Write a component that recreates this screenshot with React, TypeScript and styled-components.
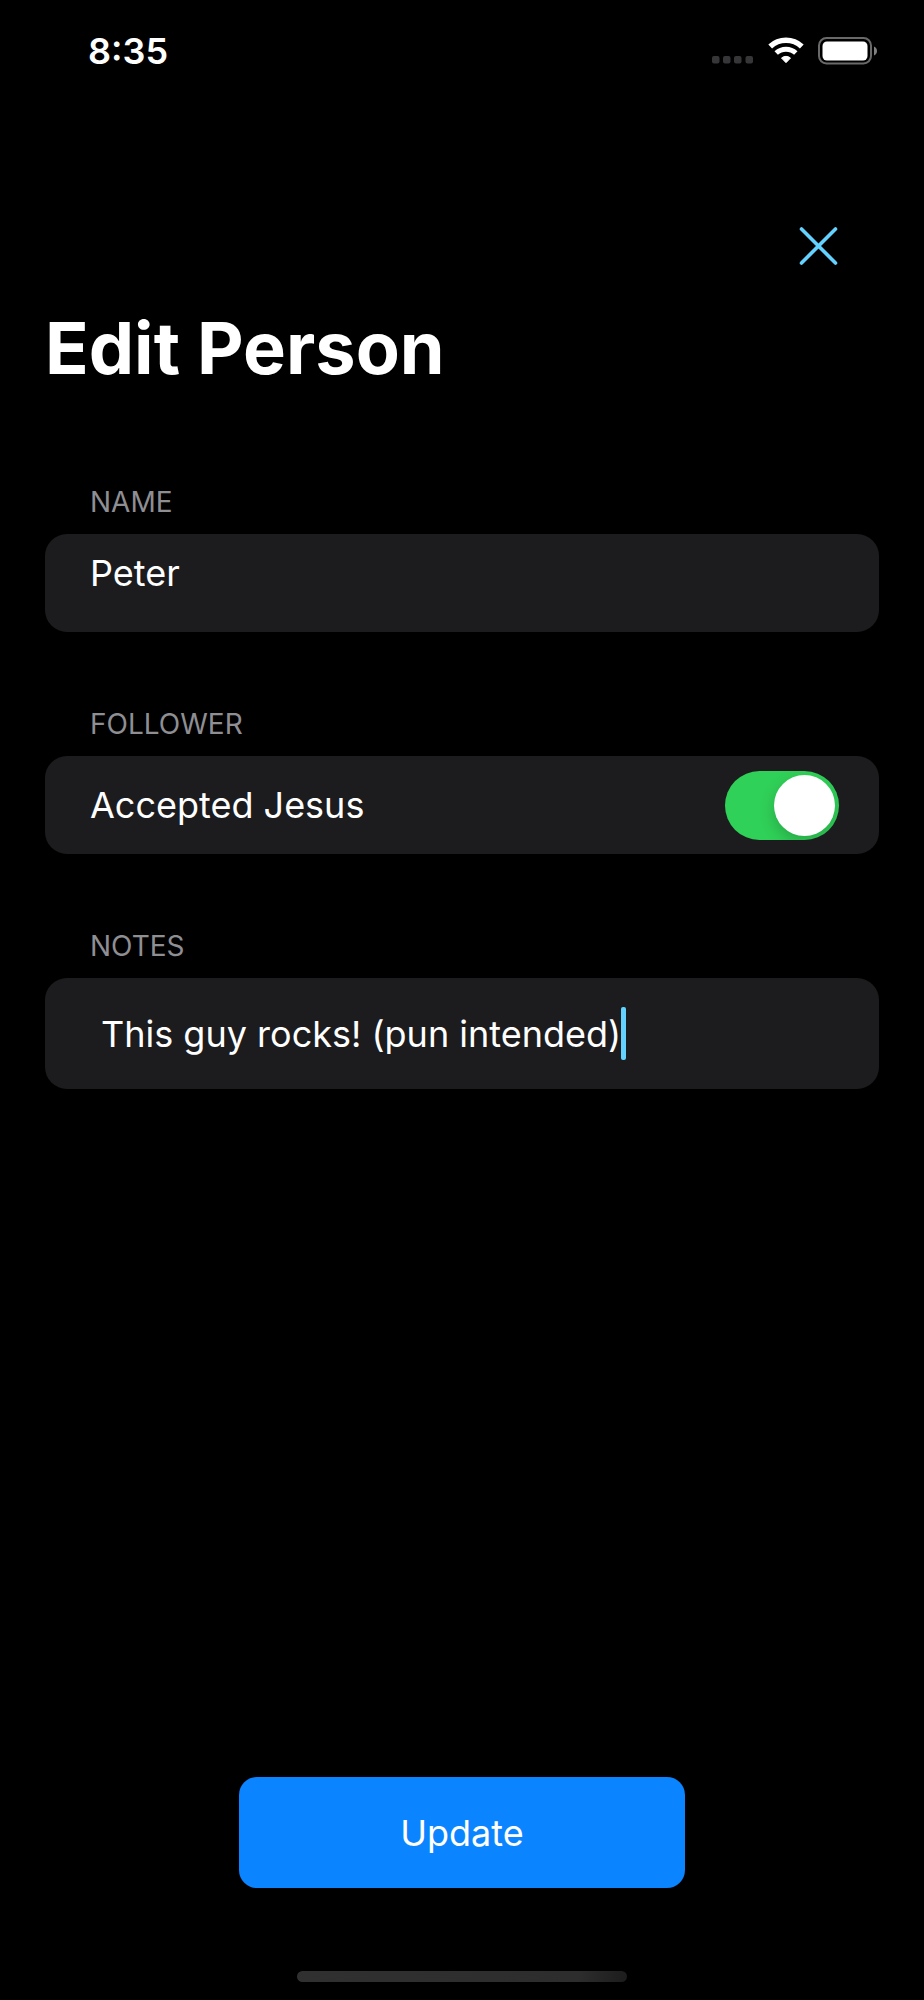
import React, { useState } from "react";
import styled, { createGlobalStyle } from "styled-components";

const GlobalStyle = createGlobalStyle`
  * { box-sizing: border-box; }
  body {
    margin: 0;
    background: #000;
    color: #fff;
    font-family: Inter, "Liberation Sans", sans-serif;
    -webkit-font-smoothing: antialiased;
  }
  button, input { font-family: inherit; color: inherit; }
`;

const Screen = styled.div`
  min-height: 100vh;
  display: flex;
  flex-direction: column;
`;

const StatusBar = styled.header`
  display: flex;
  align-items: center;
  justify-content: space-between;
  height: 102px;
  padding: 0 46px 0 88px;
`;

const Clock = styled.time`
  font-size: 36px;
  line-height: 44px;
  font-weight: 600;
`;

const StatusIcons = styled.div`
  display: flex;
  align-items: center;
  gap: 14px;

  svg { display: block; }
`;

const Form = styled.form`
  flex: 1;
  display: flex;
  flex-direction: column;
  padding: 108px 45px 83px;
`;

const CloseButton = styled.button`
  align-self: flex-end;
  display: flex;
  margin-right: 24px;
  padding: 0;
  border: 0;
  background: none;
  cursor: pointer;
`;

const Title = styled.h1`
  margin: 22px 0 0;
  font-size: 72px;
  line-height: 88px;
  font-weight: 700;
`;

const Sections = styled.div`
  display: flex;
  flex-direction: column;
  gap: 74px;
  margin-top: 92px;
`;

const Section = styled.section`
  display: flex;
  flex-direction: column;
  gap: 14px;
`;

const SectionLabel = styled.label`
  padding: 0 45px;
  color: #8e8e93;
  font-size: 28px;
  line-height: 36px;
  text-transform: uppercase;
`;

const Card = styled.div<{ $align?: string; $tall?: boolean }>`
  display: flex;
  align-items: ${(p) => p.$align ?? "center"};
  justify-content: ${(p) => (p.$tall ? "flex-start" : "space-between")};
  min-height: ${(p) => (p.$tall ? 111 : 98)}px;
  padding: ${(p) => (p.$align ? "17px 40px 0 45px" : p.$tall ? "0 56px" : "0 40px 0 45px")};
  border-radius: 22px;
  background: #1c1c1e;
`;

const TextInput = styled.input<{ $fit?: boolean }>`
  ${(p) => (p.$fit ? "field-sizing: content; max-width: 100%;" : "flex: 1; min-width: 0;")}
  height: 44px;
  padding: 0;
  border: 0;
  outline: 0;
  background: none;
  font-size: 36px;
  line-height: 44px;
`;

const Caret = styled.span`
  flex: none;
  width: 5px;
  height: 53px;
  border-radius: 2px;
  background: #64d2ff;
`;

const RowLabel = styled.label`
  font-size: 36px;
  line-height: 44px;
`;

const Switch = styled.input`
  appearance: none;
  flex: none;
  display: flex;
  width: 114px;
  height: 69px;
  margin: 0;
  padding: 4px;
  border-radius: 35px;
  background: #39393d;
  overflow: hidden;
  cursor: pointer;

  &::before {
    content: "";
    width: 61px;
    height: 61px;
    border-radius: 50%;
    background: #fff;
    box-shadow: 0 6px 16px rgba(0, 0, 0, 0.2);
  }
  &:checked {
    justify-content: flex-end;
    background: #30d158;
  }
`;

const UpdateButton = styled.button`
  align-self: center;
  width: 446px;
  max-width: 100%;
  height: 111px;
  margin-top: auto;
  padding: 0;
  border: 0;
  border-radius: 18px;
  background: #0a84ff;
  font-size: 36px;
  line-height: 44px;
  cursor: pointer;
`;

const HomeIndicator = styled.div`
  align-self: center;
  width: 330px;
  height: 11px;
  margin-bottom: 18px;
  border-radius: 6px;
  background: linear-gradient(100deg, #303030 0%, #2d2d2d 85%, #1c1c1c 100%);
`;

const CellularDots = () => (
  <svg width="42" height="28" viewBox="0 0 42 28" fill="#363638" aria-hidden="true">
    {[0, 11, 22, 33.5].map((x) => (
      <rect key={x} x={x} y="19" width="7.5" height="7.5" rx="2" />
    ))}
  </svg>
);

const Wifi = () => (
  <svg width="36" height="28" viewBox="0 0 36 28" fill="none" stroke="#fff" aria-hidden="true">
    <path d="M2.200 9.500A23.200 23.200 0 0 1 33.800 9.500" strokeWidth="5.500" />
    <path d="M8.200 16A14.400 14.400 0 0 1 27.800 16" strokeWidth="5" />
    <path
      d="M13.500 21A7 7 0 0 1 22.500 21L18 25.700Z"
      fill="#fff"
      strokeWidth="1"
      strokeLinejoin="round"
    />
  </svg>
);

const Battery = () => (
  <svg width="60" height="28" viewBox="0 0 60 28" aria-hidden="true">
    <rect x="1" y="1" width="52" height="25.500" rx="7.500" fill="none" stroke="#69696b" strokeWidth="2" />
    <rect x="4.500" y="4.500" width="45" height="19" rx="4.500" fill="#fff" />
    <path d="M56 9.500v9c1.800-.7 3-2.500 3-4.500s-1.200-3.800-3-4.500z" fill="#808080" />
  </svg>
);

export default function App() {
  const [name, setName] = useState("Peter");
  const [accepted, setAccepted] = useState(true);
  const [notes, setNotes] = useState("This guy rocks! (pun intended)");

  return (
    <Screen>
      <GlobalStyle />
      <StatusBar>
        <Clock>8:35</Clock>
        <StatusIcons>
          <CellularDots />
          <Wifi />
          <Battery />
        </StatusIcons>
      </StatusBar>
      <Form onSubmit={(e) => e.preventDefault()}>
        <CloseButton type="button" aria-label="Close">
          <svg width="72" height="72" viewBox="0 0 72 72" stroke="#64d2ff" strokeWidth="3.600" strokeLinecap="round">
            <path d="M18.500 19 52.500 53M52.500 19 18.500 53" />
          </svg>
        </CloseButton>
        <Title>Edit Person</Title>
        <Sections>
          <Section>
            <SectionLabel htmlFor="name">Name</SectionLabel>
            <Card $align="flex-start">
              <TextInput id="name" value={name} onChange={(e) => setName(e.target.value)} />
            </Card>
          </Section>
          <Section>
            <SectionLabel as="div">Follower</SectionLabel>
            <Card>
              <RowLabel htmlFor="accepted">Accepted Jesus</RowLabel>
              <Switch
                id="accepted"
                type="checkbox"
                role="switch"
                checked={accepted}
                onChange={(e) => setAccepted(e.target.checked)}
              />
            </Card>
          </Section>
          <Section>
            <SectionLabel htmlFor="notes">Notes</SectionLabel>
            <Card $tall>
              <TextInput id="notes" $fit value={notes} onChange={(e) => setNotes(e.target.value)} />
              <Caret />
            </Card>
          </Section>
        </Sections>
        <UpdateButton type="submit">Update</UpdateButton>
      </Form>
      <HomeIndicator />
    </Screen>
  );
}
